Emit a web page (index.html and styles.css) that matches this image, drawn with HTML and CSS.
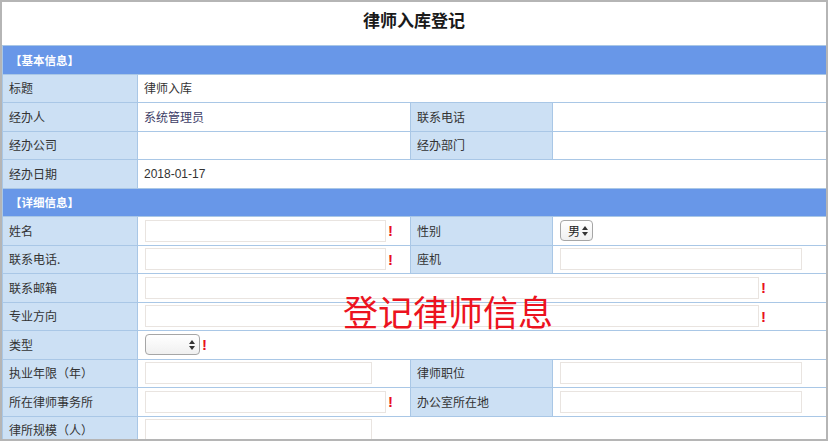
FILE: index.html
```html
<!DOCTYPE html>
<html lang="zh">
<head>
<meta charset="utf-8">
<title>律师入库登记</title>
<link rel="stylesheet" href="styles.css">
</head>
<body>
<div class="frame">
  <div class="title">律师入库登记</div>
  <table class="form">
    <colgroup>
      <col class="c1"><col class="c2"><col class="c3"><col class="c4">
    </colgroup>
    <tr><td class="sec" colspan="4">【基本信息】</td></tr>
    <tr><td class="lbl">标题</td><td colspan="3">律师入库</td></tr>
    <tr><td class="lbl">经办人</td><td class="user">系统管理员</td><td class="lbl">联系电话</td><td></td></tr>
    <tr><td class="lbl">经办公司</td><td></td><td class="lbl">经办部门</td><td></td></tr>
    <tr><td class="lbl">经办日期</td><td colspan="3" class="num">2018-01-17</td></tr>
    <tr><td class="sec" colspan="4">【详细信息】</td></tr>
    <tr><td class="lbl">姓名</td><td><div class="field"><input class="in mid" type="text"><span class="req">!</span></div></td><td class="lbl">性别</td><td><div class="field"><div class="sel sex"><span>男</span><svg class="arr" viewBox="0 0 6 10" width="6" height="10"><path d="M0 4 L3 0 L6 4 Z M0 6 L3 10 L6 6 Z" fill="#333"/></svg></div></div></td></tr>
    <tr><td class="lbl">联系电话.</td><td><div class="field"><input class="in mid" type="text"><span class="req">!</span></div></td><td class="lbl">座机</td><td><div class="field"><input class="in right" type="text"></div></td></tr>
    <tr><td class="lbl">联系邮箱</td><td colspan="3"><div class="field"><input class="in wide" type="text"><span class="req">!</span></div></td></tr>
    <tr><td class="lbl">专业方向</td><td colspan="3"><div class="field"><input class="in wide" type="text"><span class="req">!</span></div></td></tr>
    <tr><td class="lbl">类型</td><td colspan="3"><div class="field"><div class="sel type"><span></span><svg class="arr" viewBox="0 0 6 10" width="6" height="10"><path d="M0 4 L3 0 L6 4 Z M0 6 L3 10 L6 6 Z" fill="#333"/></svg></div><span class="req">!</span></div></td></tr>
    <tr><td class="lbl">执业年限（年）</td><td><div class="field"><input class="in short" type="text"></div></td><td class="lbl">律师职位</td><td><div class="field"><input class="in right" type="text"></div></td></tr>
    <tr><td class="lbl">所在律师事务所</td><td><div class="field"><input class="in mid" type="text"><span class="req">!</span></div></td><td class="lbl">办公室所在地</td><td><div class="field"><input class="in right" type="text"></div></td></tr>
    <tr><td class="lbl">律所规模（人）</td><td colspan="3"><div class="field"><input class="in short" type="text"></div></td></tr>
  </table>
  <div class="stamp">登记律师信息</div>
</div>
</body>
</html>
```

FILE: styles.css
```css
html, body {
  margin: 0;
  padding: 0;
  background: #ffffff;
}
body {
  font-family: "Liberation Sans", "Noto Sans CJK SC", sans-serif;
  font-size: 12px;
  color: #333333;
}
.frame {
  position: relative;
  width: 828px;
  height: 441px;
  box-sizing: border-box;
  border: 2px solid #b5b5b5;
  overflow: hidden;
  background: #ffffff;
}
.title {
  height: 43px;
  box-sizing: border-box;
  padding-top: 8px;
  text-align: center;
  font-family: "Noto Sans CJK SC", sans-serif;
  font-size: 17px;
  font-weight: bold;
  line-height: 20px;
  color: #1a1a1a;
}
.form {
  width: 824px;
  border-collapse: collapse;
  table-layout: fixed;
}
.c1 { width: 135px; }
.c2 { width: 273px; }
.c3 { width: 142px; }
.c4 { width: 274px; }
.form td {
  height: 28.5px;
  padding: 0 0 0 6px;
  border: 1px solid #a9c7e6;
  vertical-align: middle;
  font-family: "Noto Sans CJK SC", sans-serif;
  font-size: 12px;
  line-height: 14px;
  color: #333333;
  white-space: nowrap;
  box-sizing: border-box;
}
.form td.sec {
  background: #6897e8;
  color: #ffffff;
  font-weight: bold;
  font-size: 11.5px;
  padding-left: 7px;
}
.form td.lbl {
  background: #cce0f4;
}
.form td.user {
  color: #3d3d66;
}
.form td.num {
  font-family: "Liberation Sans", sans-serif;
}
.field {
  display: flex;
  align-items: center;
  padding-left: 1px;
}
.in {
  display: block;
  height: 22px;
  box-sizing: border-box;
  margin: 0;
  padding: 0;
  border: 1px solid #e9e4e0;
  background: #ffffff;
  outline: none;
}
.in.mid { width: 241px; }
.in.wide { width: 614px; }
.in.short { width: 227px; }
.in.right { width: 242px; }
.req {
  margin-left: 2px;
  font-family: "Liberation Sans", sans-serif;
  font-weight: bold;
  font-size: 15px;
  line-height: 15px;
  color: #e8121c;
}
.sel {
  display: flex;
  align-items: center;
  justify-content: space-between;
  height: 21px;
  box-sizing: border-box;
  border: 1px solid #a6a6a6;
  border-radius: 4px;
  background: linear-gradient(#ffffff, #f0f0f0);
  padding: 0 4px 0 7px;
  font-family: "Noto Sans CJK SC", sans-serif;
  font-size: 12px;
  color: #222222;
}
.sel.sex { width: 33px; }
.sel.type { width: 55px; }
.arr { display: block; }
.stamp {
  position: absolute;
  left: 341px;
  top: 289px;
  font-family: "Noto Sans CJK SC", sans-serif;
  font-size: 35px;
  line-height: 40px;
  color: #ec1320;
  white-space: nowrap;
}
```
